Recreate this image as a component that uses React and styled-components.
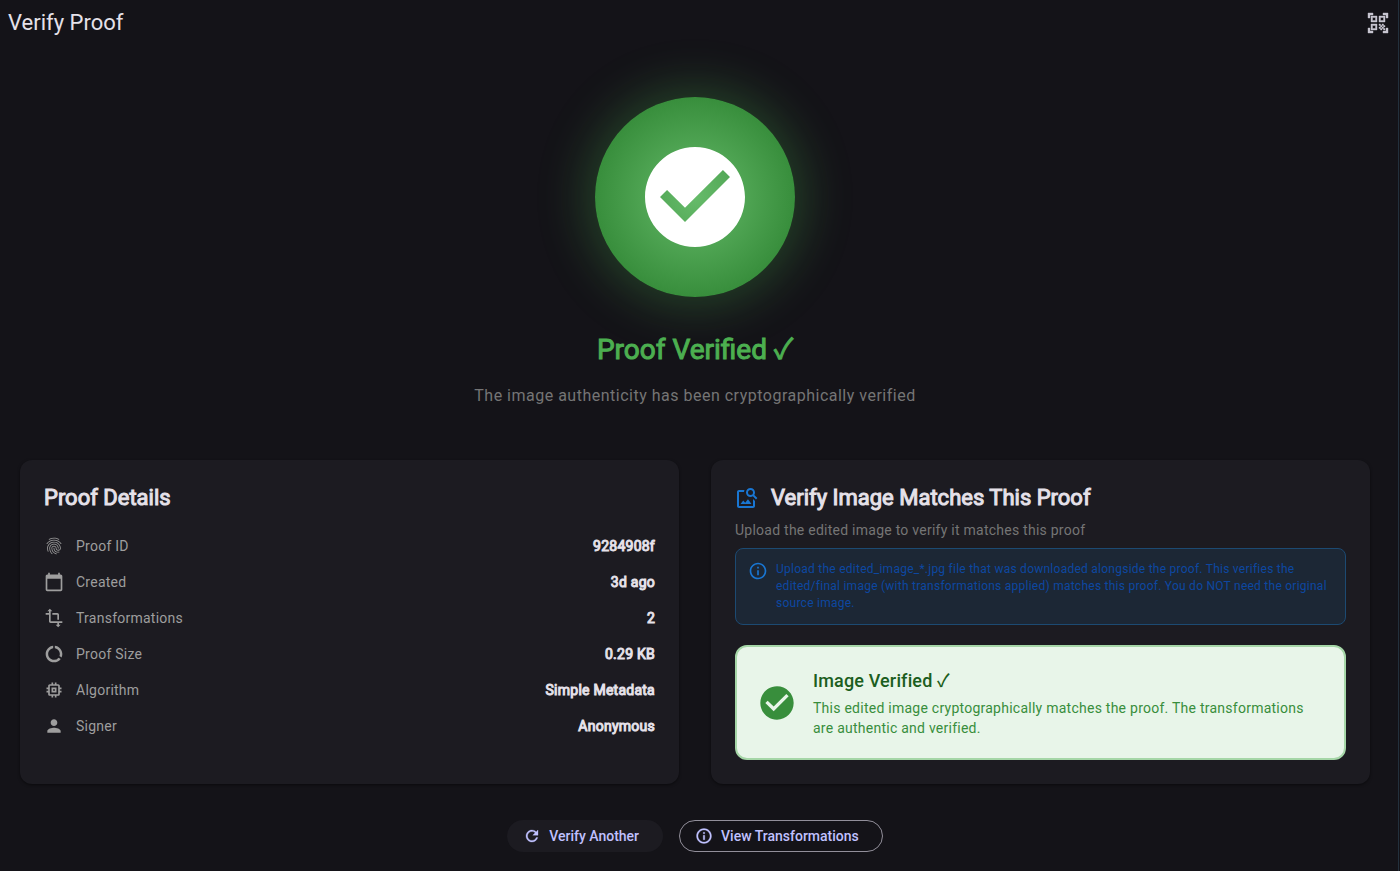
import React from "react";
import styled, { createGlobalStyle } from "styled-components";
import {
  MdQrCodeScanner,
  MdCheckCircle,
  MdFingerprint,
  MdCalendarToday,
  MdTransform,
  MdDataUsage,
  MdMemory,
  MdPerson,
  MdOutlineImageSearch,
  MdInfoOutline,
  MdRefresh,
} from "react-icons/md";

const GlobalStyle = createGlobalStyle`
  *, *::before, *::after { box-sizing: border-box; }
  body {
    margin: 0;
    background: #141318;
    color: #e5e1e9;
    font-family: Roboto, sans-serif;
    font-size: 14px;
    line-height: 20px;
  }
  h1, h2, h3, p, dl, dt, dd { margin: 0; font-weight: 400; }
  button { font: inherit; cursor: pointer; }
  svg { display: block; flex-shrink: 0; }
  button path:not([fill="none"]) { stroke-width: 0.4; }
`;

const Page = styled.div`
  min-height: 100vh;
  margin-right: 1px;
  padding-right: 8px;
  border-right: 1px solid #23303c;
`;

const AppBar = styled.header`
  display: flex;
  align-items: center;
  justify-content: space-between;
  height: 45px;
  padding: 0 0 0 8px;
`;

const AppTitle = styled.h1`
  font-size: 22px;
  line-height: 28px;
`;

const IconButton = styled.button`
  display: flex;
  padding: 0;
  border: 0;
  background: none;
  color: #c8c5d0;
`;

const Main = styled.main`
  padding: 52px 20px 16px;
`;

const Hero = styled.section`
  display: flex;
  flex-direction: column;
  align-items: center;
  text-align: center;
`;

const Badge = styled.div`
  display: flex;
  align-items: center;
  justify-content: center;
  width: 200px;
  height: 200px;
  border-radius: 50%;
  color: #fff;
  background: radial-gradient(circle closest-side, #66bb6a, #388e3c);
  box-shadow: 0 0 48px 10px rgba(76, 175, 80, 0.3);
`;

const HeroTitle = styled.h2`
  margin-top: 35px;
  color: #4caf50;
  font-family: Roboto, "Noto Sans CJK JP", sans-serif;
  font-size: 28px;
  line-height: 36px;
  -webkit-text-stroke: 1px currentColor;
`;

const HeroText = styled.p`
  margin-top: 16px;
  color: #757575;
  font-size: 16px;
  line-height: 24px;
  letter-spacing: 0.5px;
`;

const Cards = styled.div`
  display: grid;
  grid-template-columns: 1fr 1fr;
  gap: 32px;
  margin-top: 52px;
`;

const Card = styled.section`
  padding: 24px;
  border-radius: 12px;
  background: #1c1b21;
  box-shadow: 0 1px 3px rgba(0, 0, 0, 0.5);
`;

const CardHeading = styled.div`
  display: flex;
  align-items: center;
  gap: 12px;
  color: #1976d2;
`;

const CardTitle = styled.h2`
  color: #e5e1e9;
  font-size: 22px;
  line-height: 28px;
  -webkit-text-stroke: 1px currentColor;
`;

const Details = styled.dl`
  margin-top: 16px;
`;

const DetailRow = styled.div`
  display: flex;
  align-items: center;
  gap: 12px;
  padding: 8px 0;
  color: #9e9e9e;
  letter-spacing: 0.25px;
`;

const DetailLabel = styled.dt`
  flex: 1;
`;

const DetailValue = styled.dd`
  color: #e5e1e9;
  -webkit-text-stroke: 1px currentColor;
`;

const CardText = styled.p`
  margin-top: 8px;
  color: #757575;
  letter-spacing: 0.25px;
`;

const Notice = styled.div`
  display: flex;
  gap: 8px;
  margin-top: 8px;
  padding: 12px;
  border: 1px solid #1c4a72;
  border-radius: 8px;
  background: #1c2735;
  color: #1976d2;
`;

const NoticeText = styled.p`
  color: #0d47a1;
  font-size: 12px;
  line-height: 17px;
  letter-spacing: 0.25px;
`;

const Result = styled.div`
  display: flex;
  align-items: center;
  gap: 16px;
  margin-top: 20px;
  padding: 20px;
  border: 2px solid #a5d6a7;
  border-radius: 12px;
  background: #e8f5e9;
  color: #388e3c;
`;

const ResultTitle = styled.h3`
  color: #1b5e20;
  font-family: Roboto, "Noto Sans CJK JP", sans-serif;
  font-size: 18px;
  line-height: 28px;
  font-weight: 500;
  letter-spacing: 0.15px;
`;

const ResultText = styled.p`
  margin-top: 3px;
  letter-spacing: 0.25px;
`;

const Actions = styled.div`
  display: flex;
  justify-content: center;
  gap: 16px;
  margin-top: 36px;
`;

const ActionButton = styled.button`
  display: flex;
  align-items: center;
  gap: 8px;
  height: 32px;
  padding: 0 23px 0 15px;
  border: 1px solid ${(p) => (p.$outlined ? "#928f9a" : "transparent")};
  border-radius: 16px;
  background: ${(p) => (p.$outlined ? "transparent" : "#1c1b21")};
  color: #c0c1ff;
  font-weight: 500;
`;

const details = [
  [MdFingerprint, "Proof ID", "9284908f"],
  [MdCalendarToday, "Created", "3d ago"],
  [MdTransform, "Transformations", "2"],
  [MdDataUsage, "Proof Size", "0.29 KB"],
  [MdMemory, "Algorithm", "Simple Metadata"],
  [MdPerson, "Signer", "Anonymous"],
];

export default function App() {
  return (
    <>
      <GlobalStyle />
      <Page>
        <AppBar>
          <AppTitle>Verify Proof</AppTitle>
          <IconButton type="button" aria-label="Scan QR code">
            <MdQrCodeScanner size={24} />
          </IconButton>
        </AppBar>
        <Main>
          <Hero>
            <Badge>
              <MdCheckCircle size={120} />
            </Badge>
            <HeroTitle>Proof Verified ✓</HeroTitle>
            <HeroText>The image authenticity has been cryptographically verified</HeroText>
          </Hero>
          <Cards>
            <Card>
              <CardTitle>Proof Details</CardTitle>
              <Details>
                {details.map(([Icon, label, value]) => (
                  <DetailRow key={label}>
                    <Icon size={20} />
                    <DetailLabel>{label}</DetailLabel>
                    <DetailValue>{value}</DetailValue>
                  </DetailRow>
                ))}
              </Details>
            </Card>
            <Card>
              <CardHeading>
                <MdOutlineImageSearch size={24} />
                <CardTitle>Verify Image Matches This Proof</CardTitle>
              </CardHeading>
              <CardText>Upload the edited image to verify it matches this proof</CardText>
              <Notice>
                <MdInfoOutline size={20} />
                <NoticeText>
                  Upload the edited_image_*.jpg file that was downloaded alongside the proof. This
                  verifies the edited/final image (with transformations applied) matches this proof.
                  You do NOT need the original source image.
                </NoticeText>
              </Notice>
              <Result>
                <MdCheckCircle size={40} />
                <div>
                  <ResultTitle>Image Verified ✓</ResultTitle>
                  <ResultText>
                    This edited image cryptographically matches the proof. The transformations are
                    authentic and verified.
                  </ResultText>
                </div>
              </Result>
            </Card>
          </Cards>
          <Actions>
            <ActionButton type="button">
              <MdRefresh size={18} />
              Verify Another
            </ActionButton>
            <ActionButton type="button" $outlined>
              <MdInfoOutline size={18} />
              View Transformations
            </ActionButton>
          </Actions>
        </Main>
      </Page>
    </>
  );
}
